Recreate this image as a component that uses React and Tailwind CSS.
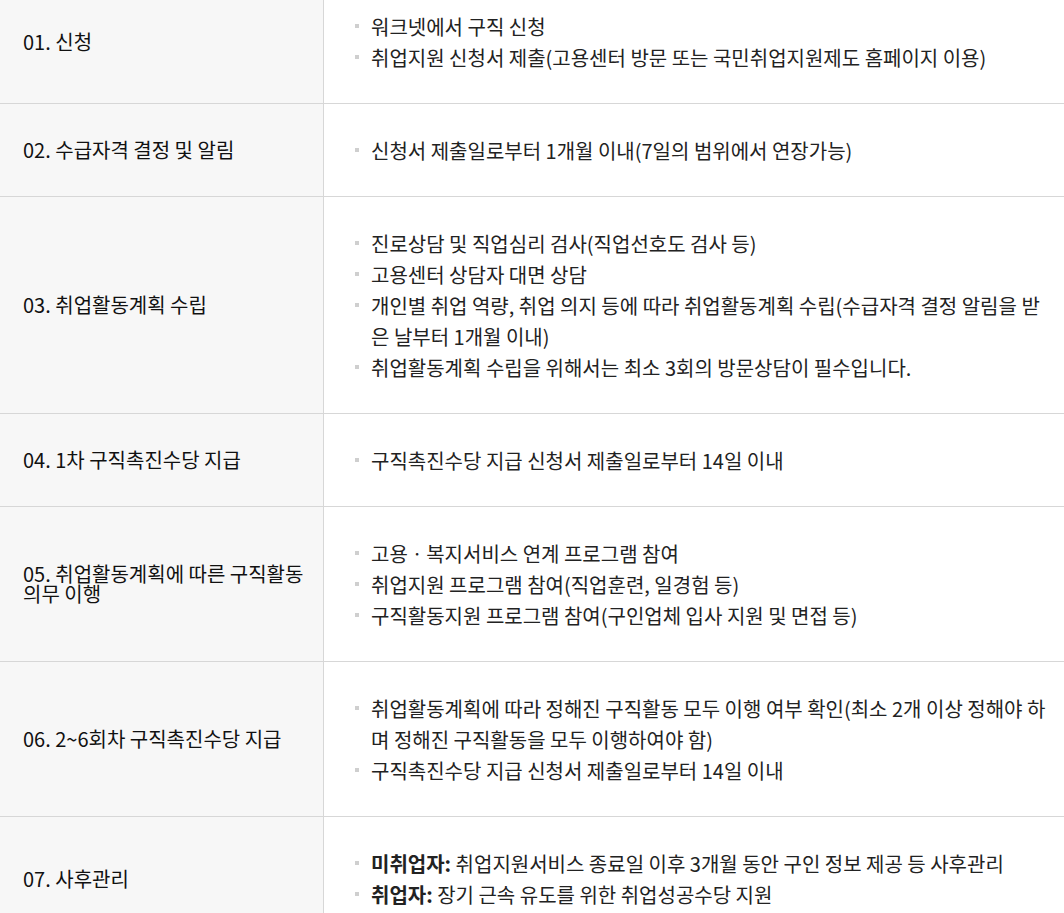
import React from 'react';

const rows = [
  {
    title: '01. 신청',
    items: ['워크넷에서 구직 신청', '취업지원 신청서 제출(고용센터 방문 또는 국민취업지원제도 홈페이지 이용)'],
  },
  {
    title: '02. 수급자격 결정 및 알림',
    items: ['신청서 제출일로부터 1개월 이내(7일의 범위에서 연장가능)'],
  },
  {
    title: '03. 취업활동계획 수립',
    items: [
      '진로상담 및 직업심리 검사(직업선호도 검사 등)',
      '고용센터 상담자 대면 상담',
      '개인별 취업 역량, 취업 의지 등에 따라 취업활동계획 수립(수급자격 결정 알림을 받은 날부터 1개월 이내)',
      '취업활동계획 수립을 위해서는 최소 3회의 방문상담이 필수입니다.',
    ],
  },
  {
    title: '04. 1차 구직촉진수당 지급',
    items: ['구직촉진수당 지급 신청서 제출일로부터 14일 이내'],
  },
  {
    title: '05. 취업활동계획에 따른 구직활동 의무 이행',
    items: [
      '고용ㆍ복지서비스 연계 프로그램 참여',
      '취업지원 프로그램 참여(직업훈련, 일경험 등)',
      '구직활동지원 프로그램 참여(구인업체 입사 지원 및 면접 등)',
    ],
  },
  {
    title: '06. 2~6회차 구직촉진수당 지급',
    items: [
      '취업활동계획에 따라 정해진 구직활동 모두 이행 여부 확인(최소 2개 이상 정해야 하며 정해진 구직활동을 모두 이행하여야 함)',
      '구직촉진수당 지급 신청서 제출일로부터 14일 이내',
    ],
  },
  {
    title: '07. 사후관리',
    items: [
      { label: '미취업자:', text: ' 취업지원서비스 종료일 이후 3개월 동안 구인 정보 제공 등 사후관리' },
      { label: '취업자:', text: ' 장기 근속 유도를 위한 취업성공수당 지원' },
    ],
  },
];

const App = () => {
  return (
    <div className="w-[1064px] h-[913px] overflow-hidden bg-white text-[#222] font-['Noto_Sans_CJK_KR','Noto_Sans',sans-serif]">
      <div className="-mt-[20px]">
        {rows.map((row, i) => (
          <div key={i} className="flex border-b border-[#d7d7d7]">
            <div className="w-[324px] shrink-0 bg-[#f7f7f7] border-r border-[#d7d7d7] flex items-center pl-[23px] pr-[12px] text-[20px] leading-[20px] text-[#111]">
              {row.title}
            </div>
            <ul className="flex-1 pt-[31px] pb-[30px] pl-[31px] pr-[10px] text-[20px] leading-[31px] break-all">
              {row.items.map((item, j) => (
                <li key={j} className="relative pl-[16px]">
                  <span className="absolute left-0 top-[13px] w-[4px] h-[4px] bg-[#cfcfcf]"></span>
                  {typeof item === 'string' ? (
                    item
                  ) : (
                    <>
                      <b className="font-bold">{item.label}</b>
                      {item.text}
                    </>
                  )}
                </li>
              ))}
            </ul>
          </div>
        ))}
      </div>
    </div>
  );
};

export default App;
